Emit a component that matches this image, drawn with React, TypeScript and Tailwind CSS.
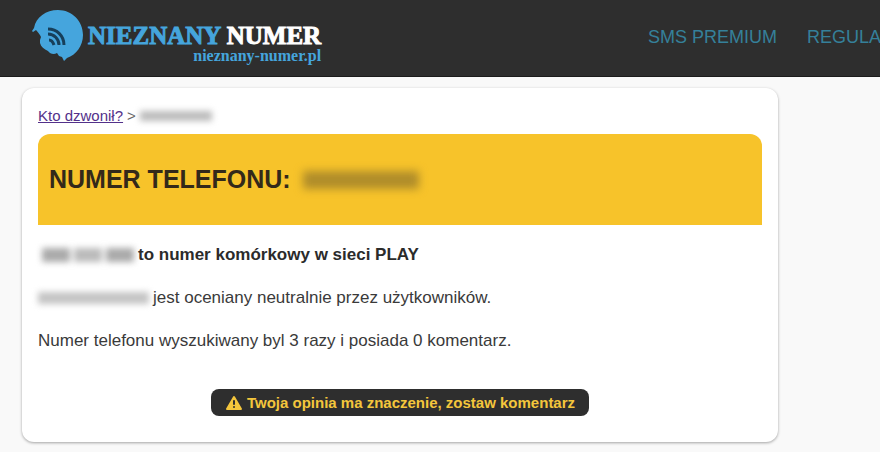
const navLinks = ['SMS PREMIUM', 'REGULAMIN'] as const;

const LogoMark = () => (
  <svg viewBox="0 0 52 52" className="h-[52px] w-[52px] shrink-0" aria-hidden="true">
    <path
      d="M0 22L2 19C4 8 14 1 26 1C40 1 51 12 51 26C51 37 44 46 35 49L32 52L30 48L27 47L25 44C22 46 18 45 16 42C12 40 9 38 8 34L8 31L9 28C8 26 6 23 4 21L1 23Z"
      fill="#45a5dd"
    />
    <g fill="none" stroke="#173f5a" strokeWidth="3">
      <path d="M16 20C25 20 32 27 32 36" />
      <path d="M16 25C22 25 27 30 27 36" />
      <path d="M17 31C19 31 21 33 22 36" />
    </g>
  </svg>
);

const Logo = () => (
  <a href="#" className="flex items-start font-['Liberation_Serif',serif] font-bold">
    <LogoMark />
    <span className="ml-1 flex flex-col items-end pt-[15px] text-[#45a5dd]">
      <span className="text-[25px] leading-6 [-webkit-text-stroke:1px_currentColor]">
        NIEZNANY <span className="text-white">NUMER</span>
      </span>
      <span className="text-base leading-4">nieznany-numer.pl</span>
    </span>
  </a>
);

const WarningIcon = () => (
  <svg viewBox="0 0 18 16" className="h-4 w-[18px] shrink-0" aria-hidden="true">
    <path
      d="M9 2L16 14H2Z"
      fill="currentColor"
      stroke="currentColor"
      strokeWidth="2"
      strokeLinejoin="round"
    />
    <path d="M9 6V9" stroke="#2e2e2e" strokeWidth="2" strokeLinecap="round" />
    <circle cx="9" cy="12" r="1" fill="#2e2e2e" />
  </svg>
);

const App = () => {
  return (
    <div className="min-h-screen bg-[#f9f9f9] font-['Liberation_Sans',Arial,sans-serif] text-[#3a3a3a]">
      <header className="flex justify-between overflow-hidden border-b border-[#1c1c1c] bg-[#2e2e2e] pt-[9px] pb-3 pl-8">
        <Logo />
        <nav className="-mr-[34px] flex items-center gap-[30px] text-lg whitespace-nowrap text-[#35809a]">
          {navLinks.map((label) => (
            <a key={label} href="#">
              {label}
            </a>
          ))}
        </nav>
      </header>

      <main className="px-[22px] pt-[11px] pb-2">
        <article className="max-w-[756px] rounded-xl bg-white px-4 pt-[18px] pb-[26px] shadow-[0_1px_3px_rgba(0,0,0,0.35)]">
          <div className="flex items-center text-[15px] leading-5">
            <a href="#" className="text-[#53318a] underline">
              Kto dzwonił?
            </a>
            <span className="mx-1 text-[#666]">&gt;</span>
            <span className="h-[10px] w-[72px] bg-[#bbb] blur-[3px]" />
          </div>

          <div className="mt-2 flex h-[91px] items-center rounded-t-xl bg-[#f7c32a] px-[11px]">
            <h1 className="text-[25px] font-bold text-[#33291a]">NUMER TELEFONU:</h1>
            <span className="ml-3 h-[18px] w-[116px] bg-[#b08d2a] blur-xs" />
          </div>

          <div className="flex flex-col gap-5 pt-[18px] text-[17px] leading-[23px]">
            <h2 className="flex items-center font-bold text-[#2b2b2b]">
              <span className="mr-1 ml-1 flex w-[92px] gap-1 blur-[3px]">
                <span className="h-[14px] flex-1 bg-[#aaa]" />
                <span className="h-[14px] flex-1 bg-[#bbb]" />
                <span className="h-[14px] flex-1 bg-[#aaa]" />
              </span>
              to numer komórkowy w sieci PLAY
            </h2>
            <p className="flex items-center">
              <span className="mr-1 h-3 w-[111px] bg-[#c4c4c4] blur-[3px]" />
              jest oceniany neutralnie przez użytkowników.
            </p>
            <p>Numer telefonu wyszukiwany byl 3 razy i posiada 0 komentarz.</p>
          </div>

          <button
            type="button"
            className="mx-auto mt-[37px] flex items-center gap-1 rounded-lg bg-[#2e2e2e] px-[14px] py-1 text-[15px] leading-[19px] font-bold text-[#f4c63c]"
          >
            <WarningIcon />
            Twoja opinia ma znaczenie, zostaw komentarz
          </button>
        </article>
      </main>
    </div>
  );
};

export default App;
